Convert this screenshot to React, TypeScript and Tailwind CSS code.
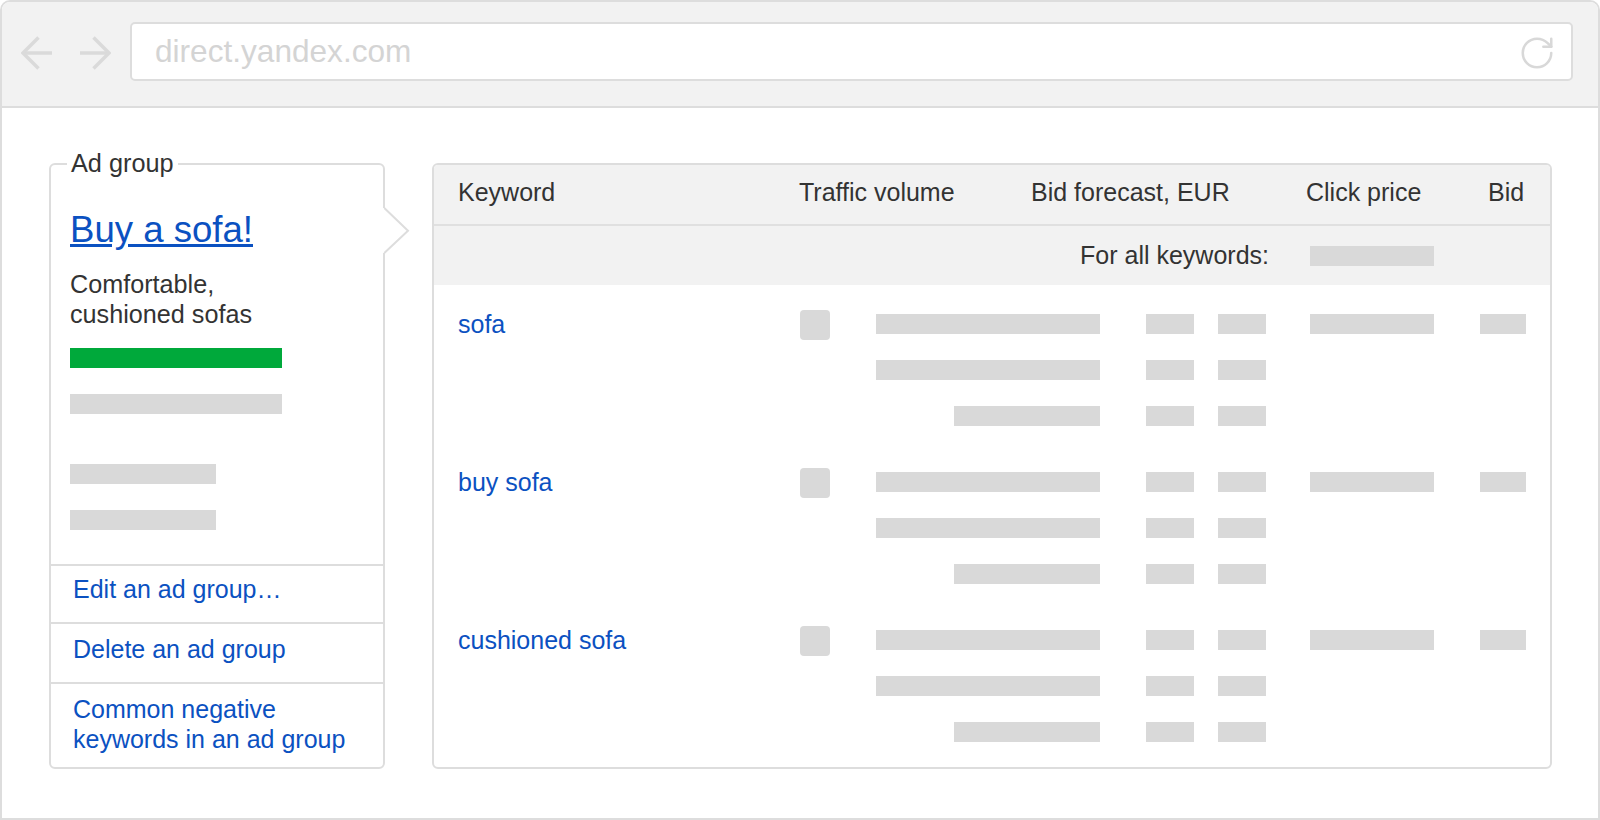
import React from "react";
import { RotateCw } from "lucide-react";

const FONT = "font-['Liberation_Sans',Arial,Helvetica,sans-serif]";

function BackArrow({ flip }: { flip?: boolean }) {
  return (
    <svg
      width="32"
      height="34"
      viewBox="0 0 32 34"
      className={flip ? "shrink-0 -scale-x-100" : "shrink-0"}
      fill="none"
      stroke="#dadada"
      strokeWidth="3.5"
    >
      <line x1="2" y1="17" x2="31" y2="17" />
      <polyline points="17.5,1.5 2,17 17.5,32.5" />
    </svg>
  );
}

function Line({ first, short }: { first?: boolean; short?: boolean }) {
  return (
    <div className="flex h-[20px]">
      <div className="flex w-[224px] justify-end">
        <div className={short ? "w-[146px] bg-[#d9d9d9]" : "w-[224px] bg-[#d9d9d9]"} />
      </div>
      <div className="ml-[46px] w-[48px] bg-[#d9d9d9]" />
      <div className="ml-[24px] w-[48px] bg-[#d9d9d9]" />
      <div className={first ? "ml-[44px] w-[124px] bg-[#d9d9d9]" : "ml-[44px] w-[124px]"} />
      <div className={first ? "ml-[46px] w-[46px] bg-[#d9d9d9]" : "ml-[46px] w-[46px]"} />
    </div>
  );
}

function KeywordRow({ name }: { name: string }) {
  return (
    <div className="flex items-start">
      <div className="flex h-[20px] w-[342px] shrink-0 items-center whitespace-nowrap text-[25px] leading-[20px] text-[#0b51c1]">
        {name}
      </div>
      <div className="w-[76px] shrink-0">
        <div className="mt-[-4px] h-[30px] w-[30px] rounded-[4px] bg-[#d9d9d9]" />
      </div>
      <div className="flex flex-col gap-[26px]">
        <Line first />
        <Line />
        <Line short />
      </div>
    </div>
  );
}

export default function App() {
  return (
    <div className={`${FONT} h-[820px] w-[1600px] bg-white`}>
      <div className="flex h-[820px] w-[1600px] flex-col overflow-hidden rounded-t-[10px] border-2 border-[#dddddd] bg-white">
        {/* Browser top bar */}
        <div className="flex h-[106px] shrink-0 items-start border-b-2 border-[#dddddd] bg-[#f2f2f2] pl-[19px] pr-[25px] pt-[20px]">
          <div className="mt-[14px]">
            <BackArrow />
          </div>
          <div className="ml-[26px] mt-[14px]">
            <BackArrow flip />
          </div>
          <div className="ml-[19px] flex h-[59px] flex-1 items-center justify-between rounded-[5px] border-2 border-[#dddddd] bg-white pl-[23px] pr-[15px]">
            <span className="text-[31.6px] text-[#d4d4d4]">direct.yandex.com</span>
            <RotateCw className="mt-[3px]" size={38} color="#d8d8d8" strokeWidth={1.6} />
          </div>
        </div>

        {/* Content */}
        <div className="flex flex-1 gap-[47px] pl-[47px] pr-[46px] pt-[55px]">
          {/* Ad group panel */}
          <div className="relative flex h-[606px] w-[336px] shrink-0 flex-col rounded-[6px] border-2 border-[#dddddd] bg-white">
            <div className="absolute left-[16px] top-[-15px] bg-white px-[4px] text-[25.3px] leading-[26px] text-[#333333]">
              Ad group
            </div>
            <svg
              className="absolute left-[332px] top-[41px] z-10"
              width="27"
              height="50"
              viewBox="0 0 27 50"
            >
              <polygon points="0,2 1.3,2 25,24.7 1.3,47 0,47" fill="#ffffff" />
              <polyline points="1.3,2 25,24.7 1.3,47" fill="none" stroke="#dddddd" strokeWidth="2" />
            </svg>

            <div className="flex-1 pl-[19px] pt-[45px]">
              <div className="text-[36.6px] leading-[40px] text-[#0b51c1] underline">Buy a sofa!</div>
              <div className="mt-[19px] text-[25.2px] leading-[30px] text-[#333333]">
                Comfortable,
                <br />
                cushioned sofas
              </div>
              <div className="mt-[19px] h-[20px] w-[212px] bg-[#00a93b]" />
              <div className="mt-[26px] h-[20px] w-[212px] bg-[#d9d9d9]" />
              <div className="mt-[50px] h-[20px] w-[146px] bg-[#d9d9d9]" />
              <div className="mt-[26px] h-[20px] w-[146px] bg-[#d9d9d9]" />
            </div>

            <div className="h-[58px] border-t-2 border-[#dddddd] pl-[22px] pt-[8px] text-[25px] leading-[30px] text-[#0b51c1]">
              Edit an ad group…
            </div>
            <div className="h-[60px] border-t-2 border-[#dddddd] pl-[22px] pt-[10px] text-[25px] leading-[30px] text-[#0b51c1]">
              Delete an ad group
            </div>
            <div className="h-[85px] border-t-2 border-[#dddddd] pl-[22px] pt-[10px] text-[25px] leading-[30px] text-[#0b51c1]">
              Common negative
              <br />
              keywords in an ad group
            </div>
          </div>

          {/* Keywords table */}
          <div className="flex h-[606px] flex-1 flex-col overflow-hidden rounded-[6px] border-2 border-[#dddddd] bg-white">
            <div className="flex h-[61px] shrink-0 items-center border-b-2 border-[#e0e0e0] bg-[#f2f2f2] pb-[3px] pl-[24px] text-[25px] text-[#333333]">
              <div className="w-[341px] shrink-0">Keyword</div>
              <div className="w-[232px] shrink-0">Traffic volume</div>
              <div className="w-[275px] shrink-0">Bid forecast, EUR</div>
              <div className="w-[182px] shrink-0">Click price</div>
              <div>Bid</div>
            </div>
            <div className="flex h-[59px] shrink-0 items-center justify-end bg-[#f2f2f2] pr-[116px] text-[25px] text-[#333333]">
              <span>For all keywords:</span>
              <div className="ml-[41px] h-[20px] w-[124px] bg-[#d9d9d9]" />
            </div>
            <div className="flex flex-col gap-[46px] pl-[24px] pt-[29px]">
              <KeywordRow name="sofa" />
              <KeywordRow name="buy sofa" />
              <KeywordRow name="cushioned sofa" />
            </div>
          </div>
        </div>
      </div>
    </div>
  );
}
